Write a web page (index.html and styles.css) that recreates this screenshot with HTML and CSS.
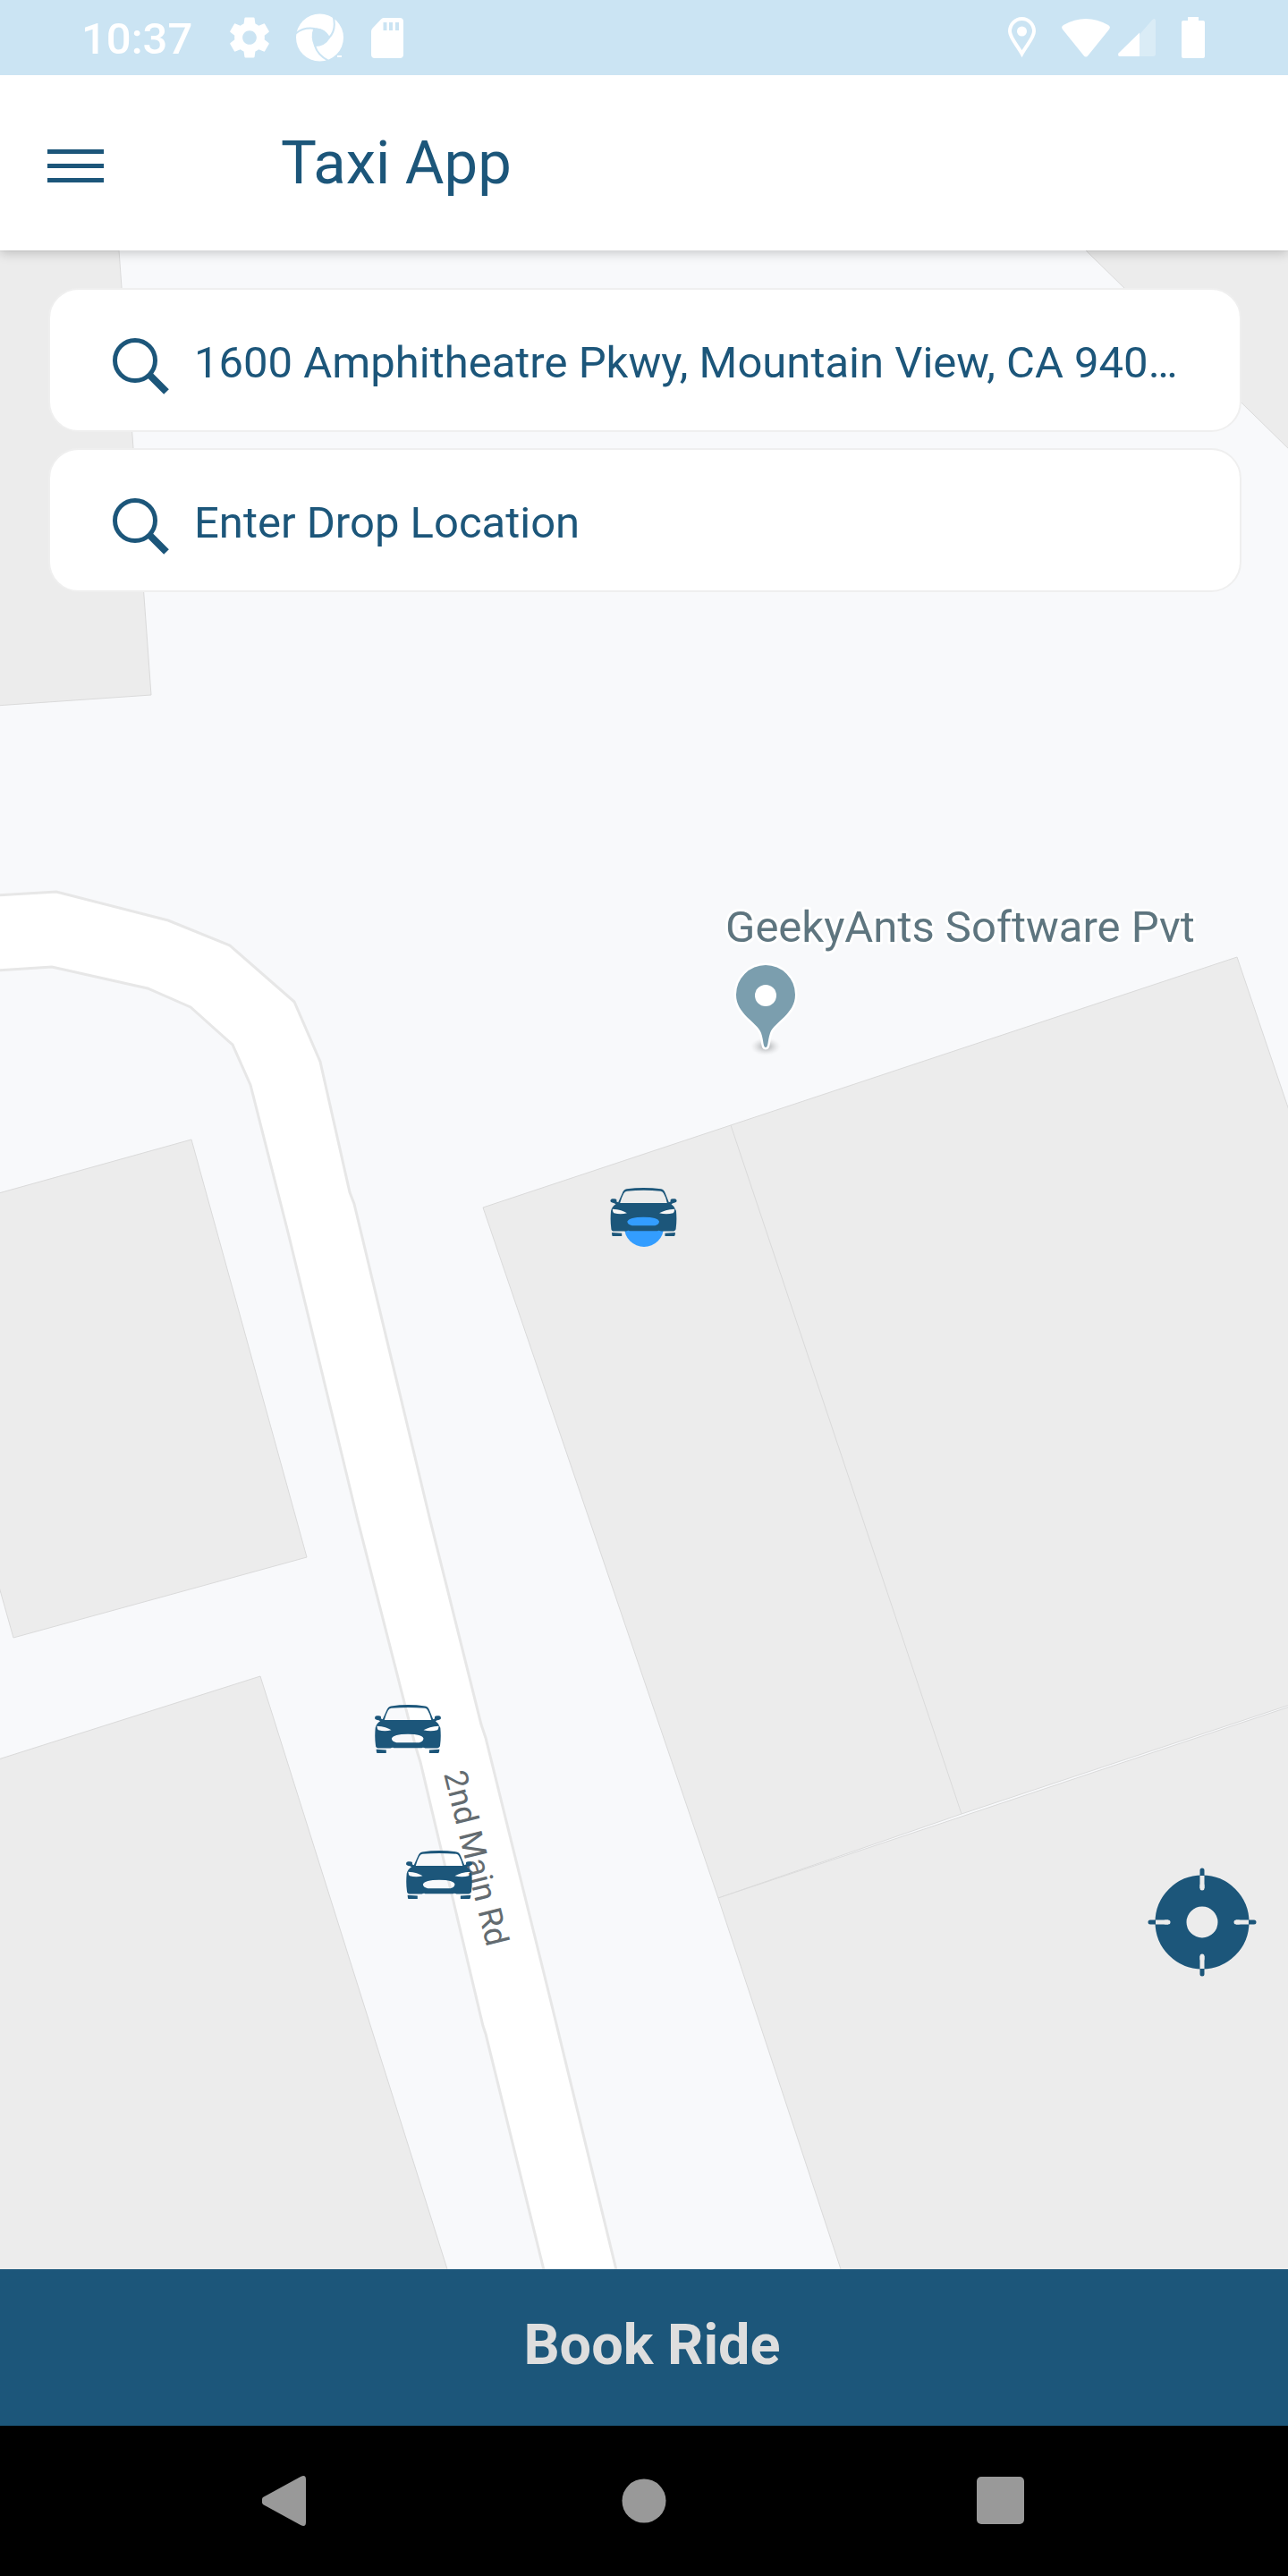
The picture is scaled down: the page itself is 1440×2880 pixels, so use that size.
FILE: index.html
```html
<!DOCTYPE html>
<html lang="en">
<head>
<meta charset="utf-8">
<meta name="viewport" content="width=device-width, initial-scale=1">
<title>Taxi App</title>
<link rel="stylesheet" href="styles.css">
</head>
<body>
<div class="app">
  <div class="status">
    <div class="status-group">
      <span class="time">10:37</span>
      <svg class="gear" width="44" height="46" viewBox="2.2 2 19.6 20" fill="currentColor" aria-hidden="true"><path d="M19.43 12.98c.04-.32.07-.64.07-.98s-.03-.66-.07-.98l2.11-1.65c.19-.15.24-.42.12-.64l-2-3.46c-.12-.22-.39-.3-.61-.22l-2.49 1c-.52-.4-1.08-.73-1.69-.98l-.38-2.65C14.460 2.180 14.250 2 14 2h-4c-.25 0-.46.18-.49.42l-.38 2.65c-.61.25-1.170.59-1.69.98l-2.49-1c-.23-.09-.49 0-.61.22l-2 3.460c-.13.22-.07.49.12.64l2.110 1.650c-.04.32-.07.65-.07.98s.03.66.07.98l-2.110 1.650c-.19.15-.24.42-.12.64l2 3.460c.12.22.39.3.61.22l2.490-1c.52.4 1.080.73 1.690.98l.38 2.650c.03.24.24.42.49.42h4c.25 0 .46-.18.49-.42l.38-2.650c.61-.25 1.170-.59 1.690-.98l2.490 1c.23.09.49 0 .61-.22l2-3.460c.12-.22.07-.49-.12-.64l-2.110-1.650zM12 15.500c-1.930 0-3.500-1.570-3.500-3.500s1.570-3.500 3.500-3.500 3.500 1.570 3.500 3.500-1.570 3.500-3.500 3.500z"/></svg>
      <svg width="54" height="54" viewBox="0 0 54 54" aria-hidden="true">
        <circle cx="26.500" cy="27" r="26.500" fill="currentColor"/>
        <g class="swirl"><path class="swirl-hole" d="M20 18Q31 16 37 27Q32 36 21 36Q17 26 20 18Z"/>
        <path d="M-1 23Q8 15 21 17Q31 18 37 27Q46 18 41 1M21 36Q24 47 38 54"/></g>
        <rect x="46" y="47" width="5" height="2" fill="currentColor"/>
      </svg>
      <svg width="36" height="45" viewBox="0 0 36 45" aria-hidden="true"><path fill="currentColor" fill-rule="evenodd" d="M14 0H32Q36 0 36 4V41Q36 45 32 45H4Q0 45 0 41V15Q0 13 1.500 11.500L11 1.500Q12 0 14 0ZM13.500 5V14H17.500V5ZM20 5V14H24V5ZM27 5V14H31V5Z"/></svg>
    </div>
    <div class="status-group status-right">
      <svg width="31" height="46" viewBox="0 0 31 46" aria-hidden="true"><path fill="none" stroke="currentColor" stroke-width="4" d="M15.500 41C10 31 2 23 2 16A13.500 14 0 0 1 29 16C29 23 21 31 15.500 41Z"/><circle cx="15.500" cy="16" r="5.500" fill="currentColor"/></svg>
      <svg class="wifi" width="54" height="43" viewBox="0 0 54 43" fill="currentColor" aria-hidden="true"><path d="M1.500 12.500Q-1.500 9 2 7Q27-7 52 7Q55.500 9 52.500 12.500L29.500 41Q27 44 24.500 41Z"/></svg>
      <svg class="signal" width="42" height="42" viewBox="0 0 42 42" fill="currentColor" aria-hidden="true"><path opacity=".3" d="M24 17.500L38 1.500Q42-2 42 3V39Q42 42 39 42H24Z"/><path d="M24 15.500V42H3Q-1 42 .500 38.500Z"/></svg>
      <svg width="26" height="46" viewBox="0 0 26 46" fill="currentColor" aria-hidden="true"><path d="M7 0H19V4H24Q26 4 26 6V44Q26 46 24 46H2Q0 46 0 44V6Q0 4 2 4H7Z"/></svg>
    </div>
  </div>

  <header class="bar">
    <button class="menu" type="button" aria-label="Menu"><svg width="63" height="37" viewBox="0 0 63 37" fill="currentColor" aria-hidden="true"><path d="M0 0H63V5H0ZM0 16H63V21H0ZM0 32H63V37H0Z"/></svg></button>
    <h1 class="title">Taxi App</h1>
  </header>

  <main class="map">
    <svg class="map-canvas" viewBox="0 280 1440 2257" preserveAspectRatio="xMidYMid slice" aria-hidden="true">
      <defs>
        <symbol id="car" viewBox="0 0 220 160">
          <path fill-rule="evenodd" d="M26 48L39 19Q44 6 54 4Q110-4 168 4Q178 6 182 18L194 48L200 45Q196 36 206 36H214Q220 37 220 44Q218 50 207 51L202 54Q214 62 218 76Q221 108 217 136Q216 143 206 144H168Q160 140 156 143H64Q60 140 52 144H12Q3 143 3 136Q-1 108 2 76Q5 62 18 54L13 51Q2 50 0 44Q0 37 6 36H14Q24 36 20 45ZM32 50H188Q184 31 176 18Q173 12 167 11Q110 6 55 11Q48 12 44 19Q37 32 32 50ZM7 70Q8 80 12 84Q34 89 55 84Q40 72 7 70ZM213 70Q180 72 162 84Q186 89 208 84Q212 80 213 70ZM56 112Q58 123 72 125H148Q160 123 162 112Q158 97 110 97Q62 97 56 112Z"/>
          <path d="M5 148L38 150V160H7Q5 158 5 148ZM215 148L181 150V160H212Q215 158 215 148Z"/>
        </symbol>
        <radialGradient id="pin-shadow"><stop offset=".3" stop-color="#c4c6c8"/><stop offset="1" stop-color="#e4e5e7" stop-opacity="0"/></radialGradient>
      </defs>
      <g class="block">
        <path d="M-5 280H133L169 777L-5 789Z"/>
        <path d="M1214 280H1445V506Z"/>
        <path d="M-5 1335L214 1274L343 1741L15 1831L-5 1760Z"/>
        <path d="M-5 1968L291 1874L501 2540H-5Z"/>
        <path d="M540 1350L1383 1070L1445 1253V1905L1075 2028L803 2122Z"/>
        <path d="M803 2122L1075 2031L1445 1907V2540H941Z"/>
        <path d="M817 1258L1075 2028"/>
      </g>
      <path class="road" d="M-5 1001L63 997L188 1029L257 1057L329 1120L358 1187L391 1333L396 1346L481 1700L538 1928L543 1943L614 2230L690 2542H609L543 2274L540 2265L470 1970L465 1954L400 1700L324 1386L320 1370L280 1213L260 1168L213 1126L165 1105L58 1081L-5 1085Z"/>
      <text class="street" transform="translate(496 1983) rotate(76)">2nd Main Rd</text>
      <text class="place" x="811" y="1053">GeekyAnts Software Pvt</text>
      <ellipse cx="856" cy="1170" rx="17" ry="10" fill="url(#pin-shadow)"/>
      <path class="pin" d="M856 1171C853 1171 854 1164 851 1155C846 1142 823 1134 823 1112A33 33 0 0 1 889 1112C889 1134 866 1142 861 1155C858 1164 859 1171 856 1171Z"/>
      <circle cx="856" cy="1113" r="12" fill="#fff"/>
      <circle cx="720" cy="1372" r="22" fill="#339dff"/>
      <path fill="#fff" d="M685 1351H702V1357H685ZM738 1351H755V1357H738Z" opacity=".6"/>
      <path fill="#ececec" d="M692 1332H746V1346H692Z"/>
      <use class="car" href="#car" x="682" y="1328" width="75" height="54"/>
      <use class="car" href="#car" x="419" y="1906" width="74" height="54"/>
      <use class="car" href="#car" x="454" y="2069" width="74" height="54"/>
    </svg>

    <form class="search">
      <label class="field">
        <svg width="64" height="74" viewBox="0 0 64 74" fill="none" stroke="currentColor" aria-hidden="true"><circle cx="25" cy="35" r="22.500" stroke-width="5"/><path stroke-width="8" d="M41 51L60 70"/></svg>
        <input type="text" aria-label="Pickup location" readonly value="1600 Amphitheatre Pkwy, Mountain View, CA 94043, USA">
      </label>
      <label class="field">
        <svg width="64" height="74" viewBox="0 0 64 74" fill="none" stroke="currentColor" aria-hidden="true"><circle cx="25" cy="35" r="22.500" stroke-width="5"/><path stroke-width="8" d="M41 51L60 70"/></svg>
        <input type="text" aria-label="Drop location" placeholder="Enter Drop Location">
      </label>
    </form>

    <button class="locate" type="button" aria-label="My location">
      <svg width="122" height="122" viewBox="0 0 122 122" aria-hidden="true">
        <circle cx="61" cy="61" r="35" fill="none" stroke="currentColor" stroke-width="35"/>
        <g stroke="currentColor" stroke-width="5" stroke-linecap="round"><path d="M61 3V10M61 112V119M3 61H10M112 61H119"/></g>
        <g stroke="#ececec" stroke-width="5"><path d="M61 9V23M61 99V113M9 61H23M99 61H113"/><path stroke-linecap="round" d="M61 20V23M61 99V102M20 61H23M99 61H102"/></g>
      </svg>
    </button>
  </main>

  <button class="book" type="button">Book Ride</button>

  <nav class="system" aria-label="System">
    <button type="button" aria-label="Back"><svg width="54" height="56" viewBox="0 0 54 56" fill="currentColor" aria-hidden="true"><path d="M1 24L43 1Q49-2 49 4V52Q49 58 43 55L1 32Q-2 28 1 24Z"/></svg></button>
    <button type="button" aria-label="Home"><svg width="50" height="50" viewBox="0 0 50 50" fill="currentColor" aria-hidden="true"><circle cx="25" cy="25" r="24.500"/></svg></button>
    <button type="button" aria-label="Recent apps"><svg width="56" height="54" viewBox="0 0 56 54" fill="currentColor" aria-hidden="true"><rect width="53" height="53" rx="5"/></svg></button>
  </nav>
</div>
</body>
</html>
```
FILE: styles.css
```css
* { box-sizing: border-box; }

body {
  margin: 0;
  font-family: Roboto, "Liberation Sans", sans-serif;
  color: #1c567a;
}

button {
  padding: 0;
  border: 0;
  background: none;
  color: inherit;
  font: inherit;
}

svg { display: block; flex: none; }

.app {
  display: flex;
  flex-direction: column;
  min-height: 100vh;
}

.status {
  position: relative;
  z-index: 2;
  display: flex;
  justify-content: space-between;
  align-items: center;
  height: 84px;
  padding: 0 93px 0 91px;
  background: #cbe4f3;
  color: #fff;
}

.status-group {
  display: flex;
  align-items: center;
  gap: 30px;
}

.time {
  padding-top: 2px;
  font-size: 49px;
  font-weight: 500;
  line-height: 57px;
}

.gear { margin-left: 12px; }
.swirl { fill: none; stroke: #cbe4f3; stroke-width: 2; }
.swirl-hole { fill: #cbe4f3; }
.status-right { gap: 29px; }
.signal { margin-left: -20px; }

.bar {
  position: relative;
  z-index: 1;
  display: flex;
  align-items: center;
  gap: 198px;
  height: 196px;
  padding: 0 53px;
  background: #fff;
  box-shadow: 0 3px 12px rgba(0, 0, 0, .2);
}

.menu { padding-top: 6px; }

.title {
  margin: 0;
  font-size: 67px;
  font-weight: 400;
  line-height: 80px;
}

.map {
  position: relative;
  flex: 1;
  min-height: 640px;
  padding: 42px 52px 42px 54px;
  background: #f8f9fb;
  overflow: hidden;
}

.map-canvas {
  position: absolute;
  inset: 0;
  width: 100%;
  height: 100%;
}

.block { fill: #ececec; stroke: #dadada; stroke-width: 1; }
.road { fill: #fff; stroke: #e7e7e7; stroke-width: 3; }
.street { font-size: 36px; fill: #636b70; }
.place { font-size: 49px; fill: #5e757f; stroke: #fff; stroke-width: 6; stroke-linejoin: round; paint-order: stroke; }
.pin { fill: #7b9eae; stroke: #fff; stroke-width: 5; paint-order: stroke; }
.car { fill: #1c567a; }

.search {
  position: relative;
  display: grid;
  gap: 18px;
}

.field {
  display: flex;
  gap: 27px;
  min-width: 0;
  padding: 44px 62px 39px 70px;
  border: 2px solid #efefef;
  border-radius: 34px;
  background: #fff;
}

.field input {
  flex: 1;
  min-width: 0;
  padding: 0;
  border: 0;
  outline: 0;
  background: none;
  color: #1c567a;
  font: 400 49px/57px Roboto, "Liberation Sans", sans-serif;
  text-overflow: ellipsis;
}

.field input::placeholder { color: #1c567a; opacity: 1; }

.locate {
  position: absolute;
  right: 35px;
  bottom: 327px;
}

.book {
  height: 175px;
  padding: 0 0 6px 18px;
  background: #1c567a;
  color: #dedede;
  font-size: 63px;
  font-weight: 700;
}

.system {
  display: grid;
  grid-template-columns: repeat(3, 1fr);
  height: 168px;
  padding: 0 120px;
  background: #000;
  color: #999;
}

.system button {
  display: grid;
  place-items: center;
}
```
